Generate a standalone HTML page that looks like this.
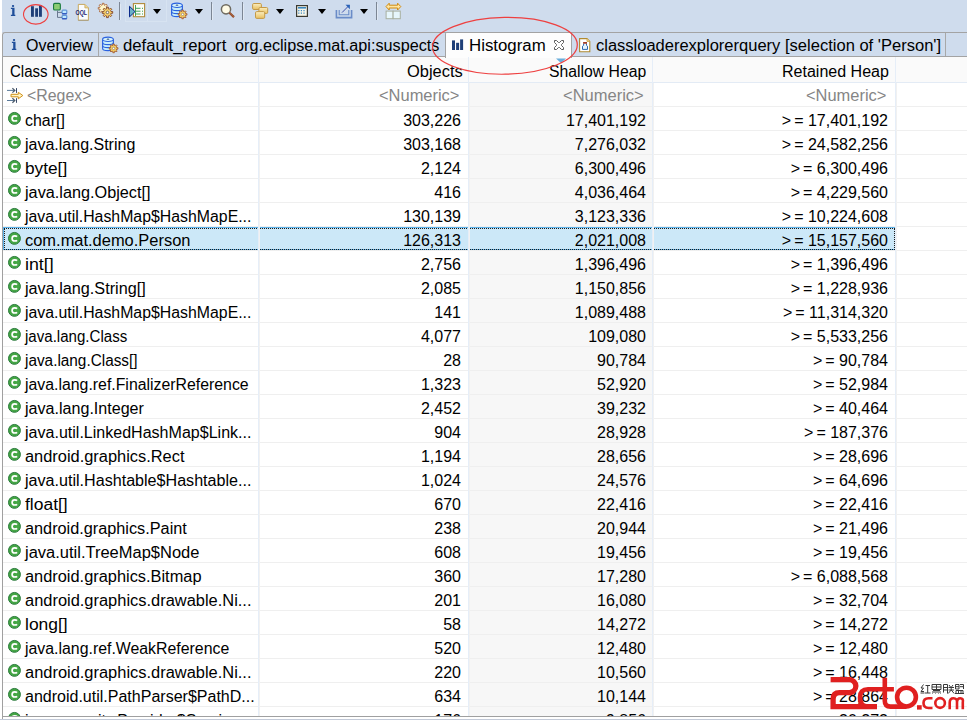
<!DOCTYPE html>
<html><head><meta charset="utf-8">
<style>
*{margin:0;padding:0;box-sizing:border-box}
html,body{width:967px;height:720px;overflow:hidden;background:#fff}
body{position:relative;font-family:"Liberation Sans",sans-serif;font-size:16px;color:#000}
svg{position:absolute;overflow:visible}
.fit{position:absolute;white-space:nowrap;line-height:23px;transform-origin:0 0}
#tb{position:absolute;left:2px;top:0;width:965px;height:33px;background:#cfdced}
.sep{position:absolute;top:2px;width:1px;height:18px;background:#7c8694}
.sep:after{content:"";position:absolute;left:1px;top:2px;width:1px;height:16px;background:#e0e9f4}
.dd{position:absolute;top:9px;width:0;height:0;border-left:4.9px solid transparent;border-right:4.9px solid transparent;border-top:5.3px solid #000}
#hot{position:absolute;left:125px;top:0;width:42px;height:22px;background:#cfdced;border:1px solid #d7e3f1;border-top:none}
#hot:after{content:"";position:absolute;left:21px;top:0;width:1px;height:21px;background:#d7e3f1}
#tabs{position:absolute;left:2px;top:32px;width:965px;height:25px;background:#cfdced;border-top:1px solid #a3a3a3;border-left:1px solid #a3a3a3;border-bottom:1px solid #a3a3a3;border-top-left-radius:3px}
.tsep{position:absolute;top:33px;width:1px;height:23px;background:#a8a8a8}
#act{position:absolute;left:445px;top:32px;width:127px;height:26px;background:#fdfdfd;border:1px solid #a3a3a3;border-bottom:none;border-top-left-radius:2px;border-top-right-radius:2px}
#grid{position:absolute;left:2px;top:57px;width:965px;height:659px;background:#fff;border-left:1px solid #a0a0a0;overflow:hidden}
#hdr{position:absolute;left:0;top:0;width:964px;height:26px;background:#fafafa;border-bottom:1px solid #e3ebf5}
.vl{position:absolute;width:1px;background:#e6eef8}
.vg{position:absolute;top:83px;width:1px;height:633px;background:#f1f1f1}
.row{position:absolute;left:3px;width:964px;height:24px;border-bottom:1px solid #efefef}
.row span,.rowx span{position:absolute;top:1px}
.rowx{position:absolute;left:3px;width:892px;height:24px;white-space:nowrap;line-height:25px}
.rowx .t4{right:7px}
.flt{color:#858585}
.gt{letter-spacing:3px;font-weight:normal}
.t1{left:22px}
.t2{right:434px}
.t3{right:249px}
.t4{right:6px}
.ci{position:absolute;left:5px;top:5px;width:13px;height:13px;border-radius:50%;background:#3f9e3f;border:1px solid #2f7f31}
.ci:after{content:"";position:absolute;left:2px;top:2px;width:7px;height:7px;border:2px solid #fff;border-right-color:transparent;border-radius:50%;box-sizing:border-box}
.sel{position:absolute;left:3px;height:23px;background:#cce8f8;box-shadow:inset 0 0 0 1px #5cb2ea;width:893px}
.sel:after{content:"";position:absolute;left:1px;top:1px;right:1px;bottom:0;border:1px dotted #1a1a1a}
#col3{position:absolute;left:469px;top:83px;width:183px;height:633px;background:#f7f7f7}
#bot{position:absolute;left:2px;top:716px;width:965px;height:4px;background:#fff;border-top:1px solid #a0a0a0;border-left:1px solid #a0a0a0}
#bot:after{content:"";position:absolute;left:-3px;right:0;bottom:0;height:1px;background:#c3cad8}
</style></head><body>
<div id="tb"></div>
<div id="tabs"></div>
<div id="grid"></div>
<div id="hdr" style="left:3px;top:57px"></div>
<div id="col3"></div>
<svg style="left:10px;top:4px" width="6" height="13" viewBox="0 0 6 13"><rect x="1.9" y="0.9" width="2.3" height="2.1" rx="1" fill="#1f4e9a"/><path d="M0.9 3.8H4.5V10.7H5.3V12H0.9V10.7H2.2V5.1H0.9z" fill="#1f4e9a"/></svg><svg style="left:31px;top:5px" width="12" height="12" viewBox="0 0 12 12"><rect x="0" y="1.2" width="2.9" height="10.6" fill="#1e3f78"/><rect x="4.2" y="3.3" width="2.8" height="8.5" fill="#1e3f78"/><rect x="8" y="0.2" width="2.9" height="11.6" fill="#1e3f78"/></svg><svg style="left:52px;top:2px" width="16" height="18" viewBox="0 0 16 18"><rect x="1.55" y="1.4" width="6.8" height="6.6" rx="1.3" fill="#8ccc72" stroke="#1a7a3e" stroke-width="1.1"/><path d="M5.5 8.5V15.4H10M5.5 10.4H10" stroke="#6a7890" stroke-width="1" fill="none"/><rect x="10.1" y="8.1" width="4.7" height="3.7" rx="0.6" fill="#bfe8ff" stroke="#3a78c8" stroke-width="0.9"/><rect x="10.1" y="13.3" width="4.7" height="3.5" rx="0.6" fill="#bfe8ff" stroke="#3a78c8" stroke-width="0.9"/><path d="M10.1 11.8h4.7M10.1 16.8h4.7" stroke="#1f3fb8" stroke-width="1"/></svg><svg style="left:75px;top:3px" width="15" height="16" viewBox="0 0 15 16"><path d="M3.3 1.4h6.6l3.5 3.5v12.4H3.3z" fill="#fafcff" stroke="#c8a860" stroke-width="1"/><path d="M9.9 1.4v3.5h3.5" fill="#f0d890" stroke="#c8a860" stroke-width="0.8"/><path d="M3.3 17.3h10.1" stroke="#a8a088" stroke-width="1"/><text x="0.5" y="12" font-family="Liberation Sans" font-weight="bold" font-size="7.6" fill="#1a2470" textLength="11.5" lengthAdjust="spacingAndGlyphs">OQL</text></svg><svg style="left:94px;top:0px" width="20" height="20" viewBox="0 0 20 20"><path d="M14.13 7.39L14.13 9.11L12.60 9.07L12.18 10.08L13.29 11.13L12.08 12.34L11.03 11.23L10.02 11.65L10.06 13.18L8.34 13.18L8.38 11.65L7.37 11.23L6.32 12.34L5.11 11.13L6.22 10.08L5.80 9.07L4.27 9.11L4.27 7.39L5.80 7.43L6.22 6.42L5.11 5.37L6.32 4.16L7.37 5.27L8.38 4.85L8.34 3.32L10.06 3.32L10.02 4.85L11.03 5.27L12.08 4.16L13.29 5.37L12.18 6.42L12.60 7.43Z" fill="#fff6c8" stroke="#b07048" stroke-width="1"/><path d="M18.67 11.49L18.67 13.31L17.05 13.26L16.60 14.33L17.79 15.45L16.50 16.74L15.38 15.55L14.31 16.00L14.36 17.62L12.54 17.62L12.59 16.00L11.52 15.55L10.40 16.74L9.11 15.45L10.30 14.33L9.85 13.26L8.23 13.31L8.23 11.49L9.85 11.54L10.30 10.47L9.11 9.35L10.40 8.06L11.52 9.25L12.59 8.80L12.54 7.18L14.36 7.18L14.31 8.80L15.38 9.25L16.50 8.06L17.79 9.35L16.60 10.47L17.05 11.54Z" fill="#f6d06a" stroke="#8a5034" stroke-width="1"/><circle cx="13.45" cy="12.4" r="1.3" fill="#fff" stroke="#5a4a40" stroke-width="0.8"/></svg><div class="sep" style="left:119px"></div><div id="hot"></div><svg style="left:129px;top:3px" width="17" height="15" viewBox="0 0 17 15"><rect x="4.4" y="0.6" width="11.2" height="13.1" fill="#fdfdf8" stroke="#b08a3a" stroke-width="1.1"/><path d="M6.5 2v11M6.5 5.3h5M6.5 8.2h5M6.5 11h5" stroke="#2e9a4a" stroke-width="0.9" fill="none"/><path d="M13 5.3h1M13 8.2h1M13 11h1" stroke="#2e9a4a" stroke-width="1"/><path d="M0.5 3.3l5.5 5.3l-5.5 5.3z" fill="#6ab0c8" stroke="#0a2a8a" stroke-width="1"/></svg><div class="dd" style="left:153px"></div><div class="dd" style="left:195px"></div><div class="dd" style="left:276px"></div><div class="dd" style="left:318px"></div><div class="dd" style="left:360px"></div><svg style="left:170px;top:2px" width="18" height="18" viewBox="0 0 18 18"><path d="M1.6 3.3V12.4A5.4 2.2 0 0 0 12.4 12.4V3.3" fill="#c6ecfa" stroke="#2a62e0" stroke-width="1.1"/><path d="M1.6 6.4A5.4 2.2 0 0 0 12.4 6.4M1.6 9.4A5.4 2.2 0 0 0 12.4 9.4" fill="none" stroke="#2a62e0" stroke-width="1.1"/><ellipse cx="7" cy="3.3" rx="5.4" ry="2.2" fill="#d8f4fc" stroke="#2a62e0" stroke-width="1.1"/><ellipse cx="7" cy="3.2" rx="1.4" ry="0.6" fill="#3a5a8a"/><path d="M16.93 11.64L16.93 13.16L15.61 13.12L15.24 14.02L16.20 14.93L15.13 16.00L14.22 15.04L13.32 15.41L13.36 16.73L11.84 16.73L11.88 15.41L10.98 15.04L10.07 16.00L9.00 14.93L9.96 14.02L9.59 13.12L8.27 13.16L8.27 11.64L9.59 11.68L9.96 10.78L9.00 9.87L10.07 8.80L10.98 9.76L11.88 9.39L11.84 8.07L13.36 8.07L13.32 9.39L14.22 9.76L15.13 8.80L16.20 9.87L15.24 10.78L15.61 11.68Z" fill="#f8d060" stroke="#a05a34" stroke-width="0.9"/><circle cx="12.6" cy="12.4" r="1.2" fill="#fff" stroke="#7a6a60" stroke-width="0.6"/></svg><div class="sep" style="left:211px"></div><svg style="left:220px;top:3px" width="16" height="16" viewBox="0 0 16 16"><circle cx="6" cy="6.3" r="4.6" fill="#fffbe6" stroke="#6e6a60" stroke-width="1.5"/><path d="M9.4 9.7l4.6 4.4" stroke="#8a4a2a" stroke-width="2.2"/><path d="M9.4 9.7l4.6 4.4" stroke="#c06a40" stroke-width="0.8"/></svg><div class="sep" style="left:242px"></div><svg style="left:251px;top:2px" width="18" height="18" viewBox="0 0 18 18"><defs><linearGradient id="gy" x1="0" y1="0" x2="0" y2="1"><stop offset="0" stop-color="#fbeec0"/><stop offset="1" stop-color="#e8c060"/></linearGradient></defs><rect x="1.6" y="1.5" width="8.8" height="6" rx="1.2" fill="url(#gy)" stroke="#c49a48"/><rect x="7.9" y="5.5" width="8.8" height="6" rx="1.2" fill="url(#gy)" stroke="#c49a48"/><rect x="4.5" y="9.6" width="9.2" height="6.8" rx="1.2" fill="url(#gy)" stroke="#c49a48"/></svg><svg style="left:296px;top:5px" width="12" height="12" viewBox="0 0 12 12"><rect x="0.6" y="0.6" width="10.8" height="10.8" fill="#f6f6ea" stroke="#3a3a32" stroke-width="1.2"/><rect x="2" y="2" width="8" height="1.6" fill="#3a88c0"/><path d="M2.2 5.6h1.2M4.8 5.6h1.2M7.4 5.6h1.2M2.2 8.2h1.2M4.8 8.2h1.2M7.4 8.2h1.2" stroke="#3a88c0" stroke-width="1.3"/></svg><svg style="left:335px;top:3px" width="18" height="16" viewBox="0 0 18 16"><path d="M1.4 7v7.6h15.2V7" fill="none" stroke="#6a8cc8" stroke-width="1.6"/><path d="M4.2 7v4.8h9.6V7" fill="none" stroke="#6a8cc8" stroke-width="1.1"/><path d="M7 9.6L14 2.5" stroke="#3040a0" stroke-width="0.9"/><path d="M10.5 1.8h4.4v4.4z" fill="#2a62b8"/></svg><div class="sep" style="left:376px"></div><svg style="left:385px;top:2px" width="17" height="18" viewBox="0 0 17 18"><path d="M4.2 1.2L1 4.6L4.2 8V6h8.4v2l3.2-3.4L12.6 1.2v2H4.2z" fill="#ffe6a0" stroke="#d08a10" stroke-width="1"/><rect x="1.1" y="9.1" width="7" height="7.6" fill="#e6f6fc" stroke="#a8b0a0"/><rect x="8.1" y="9.1" width="7.2" height="7.6" fill="#e6f6fc" stroke="#a8b0a0"/></svg><svg style="left:0;top:0" width="60" height="30" viewBox="0 0 60 30"><ellipse cx="35.8" cy="14.35" rx="12.3" ry="9.75" fill="none" stroke="#ee4040" stroke-width="1.1"/></svg>
<svg style="left:11px;top:38px" width="6" height="13" viewBox="0 0 6 13"><rect x="1.9" y="0.9" width="2.3" height="2.1" rx="1" fill="#1f4e9a"/><path d="M0.9 3.8H4.5V10.7H5.3V12H0.9V10.7H2.2V5.1H0.9z" fill="#1f4e9a"/></svg><span class="fit " style="transform:scaleX(1.0011);left:26.40px;top:34px;">Overview</span><div class="tsep" style="left:98px"></div><svg style="left:101px;top:36px" width="18" height="18" viewBox="0 0 18 18"><path d="M1.6 3.3V12.4A5.4 2.2 0 0 0 12.4 12.4V3.3" fill="#c6ecfa" stroke="#2a62e0" stroke-width="1.1"/><path d="M1.6 6.4A5.4 2.2 0 0 0 12.4 6.4M1.6 9.4A5.4 2.2 0 0 0 12.4 9.4" fill="none" stroke="#2a62e0" stroke-width="1.1"/><ellipse cx="7" cy="3.3" rx="5.4" ry="2.2" fill="#d8f4fc" stroke="#2a62e0" stroke-width="1.1"/><ellipse cx="7" cy="3.2" rx="1.4" ry="0.6" fill="#3a5a8a"/><path d="M16.93 11.64L16.93 13.16L15.61 13.12L15.24 14.02L16.20 14.93L15.13 16.00L14.22 15.04L13.32 15.41L13.36 16.73L11.84 16.73L11.88 15.41L10.98 15.04L10.07 16.00L9.00 14.93L9.96 14.02L9.59 13.12L8.27 13.16L8.27 11.64L9.59 11.68L9.96 10.78L9.00 9.87L10.07 8.80L10.98 9.76L11.88 9.39L11.84 8.07L13.36 8.07L13.32 9.39L14.22 9.76L15.13 8.80L16.20 9.87L15.24 10.78L15.61 11.68Z" fill="#f8d060" stroke="#a05a34" stroke-width="0.9"/><circle cx="12.6" cy="12.4" r="1.2" fill="#fff" stroke="#7a6a60" stroke-width="0.6"/></svg><span class="fit " style="transform:scaleX(1.0464);left:122.80px;top:34px;">default_report</span><span class="fit " style="transform:scaleX(1.0125);left:235.40px;top:34px;">org.eclipse.mat.api:suspects</span><div id="act"></div><svg style="left:452px;top:39px" width="12" height="12" viewBox="0 0 12 12"><rect x="0" y="1.4" width="3" height="9.6" fill="#1e3f78"/><rect x="4.1" y="3.8" width="3" height="7.2" fill="#1e3f78"/><rect x="8.1" y="0.4" width="3" height="10.6" fill="#1e3f78"/></svg><span class="fit " style="transform:scaleX(1.0520);left:468.75px;top:34px;">Histogram</span><svg style="left:554px;top:40px" width="10" height="10" viewBox="0 0 10 10"><path d="M0.5 0.5H2.5L4.5 2.5H5.5L7.5 0.5H9.5V2.5L7.5 4.5V5.5L9.5 7.5V9.5H7.5L5.5 7.5H4.5L2.5 9.5H0.5V7.5L2.5 5.5V4.5L0.5 2.5Z" fill="#fff" stroke="#5c5c5c" stroke-width="1"/></svg><svg style="left:578px;top:37px" width="13" height="16" viewBox="0 0 13 16"><path d="M1.6 1.6h7.4l2.8 2.8v10.4H1.6z" fill="#fff" stroke="#b08a30" stroke-width="1.1"/><path d="M9 1.6v2.8h2.8" fill="#f0d890" stroke="#c8a040" stroke-width="0.8"/><path d="M5.6 6.7V8.4L4.5 9.2V12.4H9.5V9.2L8.5 8.4V6.7" fill="#e6f4fc" stroke="#2a68b0" stroke-width="1"/><rect x="5.1" y="5.1" width="3.9" height="1.6" fill="#9a2a10"/></svg><span class="fit " style="transform:scaleX(1.0310);left:596.20px;top:34px;">classloaderexplorerquery</span><span class="fit " style="transform:scaleX(1.0332);left:785.17px;top:34px;">[selection of 'Person']</span><div class="tsep" style="left:945px"></div>
<span class="fit " style="transform:scaleX(0.9400);left:9.50px;top:60px;">Class Name</span><span class="fit " style="transform:scaleX(1.0269);left:406.70px;top:60px;">Objects</span><span class="fit " style="transform:scaleX(0.9845);left:548.70px;top:60px;">Shallow Heap</span><span class="fit " style="transform:scaleX(1.0015);left:782.00px;top:60px;">Retained Heap</span><svg style="left:556px;top:58px" width="11" height="6" viewBox="0 0 11 6"><path d="M0 0.5h10l-5 4.6z" fill="#6aaedc"/></svg>
<div class="row" style="top:83px;color:#8a8a8a"><svg style="left:0px;top:0px" width="24" height="24" viewBox="0 0 24 24"><path d="M4 7.4H11.5M4 17.5H11.5" stroke="#5a7a9a" stroke-width="1" fill="none"/><path d="M9.4 5.2L11.8 7.4L9.4 9.6M9.4 15.3L11.8 17.5L9.4 19.7" stroke="#4a5868" stroke-width="1.2" fill="none"/><path d="M13.5 5.1V9.9M13.5 15.2V19.8" stroke="#3a4a68" stroke-width="1" fill="none"/><path d="M8 11.3H15.3V9.3L19.8 12.5L15.3 15.8V13.8H8Z" fill="#fff6c8" stroke="#d09018" stroke-width="1"/></svg></div><span class="fit flt" style="transform:scaleX(0.9924);left:26.90px;top:84px;">&lt;Regex&gt;</span><span class="fit flt" style="transform:scaleX(1.0282);left:378.80px;top:84px;">&lt;Numeric&gt;</span><span class="fit flt" style="transform:scaleX(1.0320);left:563.10px;top:84px;">&lt;Numeric&gt;</span><span class="fit flt" style="transform:scaleX(1.0269);left:806.20px;top:84px;">&lt;Numeric&gt;</span>
<div class="row" style="top:107px"></div><div class="rowx" style="top:107px"><svg style="left:4px;top:4px" width="15" height="15" viewBox="0 0 15 15"><circle cx="7.45" cy="7.4" r="5.95" fill="#44a644" stroke="#2a7a3c" stroke-width="1"/><path d="M10.1 5.6Q9.4 4.9 7.7 4.9Q5.1 4.9 5.1 7.45Q5.1 10 7.7 10Q9.4 10 10.1 9.3" fill="none" stroke="#fff" stroke-width="1.7"/></svg></div><span class="fit cn" style="transform:scaleX(0.9982);left:25.00px;top:108.5px;">char[]</span><div class="rowx" style="top:107px"><span class="t2">303,226</span><span class="t3">17,401,192</span><span class="t4"><b class="gt">&gt;</b>= 17,401,192</span></div>
<div class="row" style="top:131px"></div><div class="rowx" style="top:131px"><svg style="left:4px;top:4px" width="15" height="15" viewBox="0 0 15 15"><circle cx="7.45" cy="7.4" r="5.95" fill="#44a644" stroke="#2a7a3c" stroke-width="1"/><path d="M10.1 5.6Q9.4 4.9 7.7 4.9Q5.1 4.9 5.1 7.45Q5.1 10 7.7 10Q9.4 10 10.1 9.3" fill="none" stroke="#fff" stroke-width="1.7"/></svg></div><span class="fit cn" style="transform:scaleX(1.0001);left:25.00px;top:132.5px;">java.lang.String</span><div class="rowx" style="top:131px"><span class="t2">303,168</span><span class="t3">7,276,032</span><span class="t4"><b class="gt">&gt;</b>= 24,582,256</span></div>
<div class="row" style="top:155px"></div><div class="rowx" style="top:155px"><svg style="left:4px;top:4px" width="15" height="15" viewBox="0 0 15 15"><circle cx="7.45" cy="7.4" r="5.95" fill="#44a644" stroke="#2a7a3c" stroke-width="1"/><path d="M10.1 5.6Q9.4 4.9 7.7 4.9Q5.1 4.9 5.1 7.45Q5.1 10 7.7 10Q9.4 10 10.1 9.3" fill="none" stroke="#fff" stroke-width="1.7"/></svg></div><span class="fit cn" style="transform:scaleX(1.0779);left:25.00px;top:156.5px;">byte[]</span><div class="rowx" style="top:155px"><span class="t2">2,124</span><span class="t3">6,300,496</span><span class="t4"><b class="gt">&gt;</b>= 6,300,496</span></div>
<div class="row" style="top:179px"></div><div class="rowx" style="top:179px"><svg style="left:4px;top:4px" width="15" height="15" viewBox="0 0 15 15"><circle cx="7.45" cy="7.4" r="5.95" fill="#44a644" stroke="#2a7a3c" stroke-width="1"/><path d="M10.1 5.6Q9.4 4.9 7.7 4.9Q5.1 4.9 5.1 7.45Q5.1 10 7.7 10Q9.4 10 10.1 9.3" fill="none" stroke="#fff" stroke-width="1.7"/></svg></div><span class="fit cn" style="transform:scaleX(1.0148);left:25.00px;top:180.5px;">java.lang.Object[]</span><div class="rowx" style="top:179px"><span class="t2">416</span><span class="t3">4,036,464</span><span class="t4"><b class="gt">&gt;</b>= 4,229,560</span></div>
<div class="row" style="top:203px"></div><div class="rowx" style="top:203px"><svg style="left:4px;top:4px" width="15" height="15" viewBox="0 0 15 15"><circle cx="7.45" cy="7.4" r="5.95" fill="#44a644" stroke="#2a7a3c" stroke-width="1"/><path d="M10.1 5.6Q9.4 4.9 7.7 4.9Q5.1 4.9 5.1 7.45Q5.1 10 7.7 10Q9.4 10 10.1 9.3" fill="none" stroke="#fff" stroke-width="1.7"/></svg></div><span class="fit cn" style="transform:scaleX(0.9907);left:25.00px;top:204.5px;">java.util.HashMap$HashMapE...</span><div class="rowx" style="top:203px"><span class="t2">130,139</span><span class="t3">3,123,336</span><span class="t4"><b class="gt">&gt;</b>= 10,224,608</span></div>
<div class="row" style="top:227px"></div><div class="sel" style="top:227px"></div><div class="rowx" style="top:227px"><svg style="left:4px;top:4px" width="15" height="15" viewBox="0 0 15 15"><circle cx="7.45" cy="7.4" r="5.95" fill="#44a644" stroke="#2a7a3c" stroke-width="1"/><path d="M10.1 5.6Q9.4 4.9 7.7 4.9Q5.1 4.9 5.1 7.45Q5.1 10 7.7 10Q9.4 10 10.1 9.3" fill="none" stroke="#fff" stroke-width="1.7"/></svg></div><span class="fit cn" style="transform:scaleX(1.0278);left:25.00px;top:228.5px;">com.mat.demo.Person</span><div class="rowx" style="top:227px"><span class="t2">126,313</span><span class="t3">2,021,008</span><span class="t4"><b class="gt">&gt;</b>= 15,157,560</span></div>
<div class="row" style="top:251px"></div><div class="rowx" style="top:251px"><svg style="left:4px;top:4px" width="15" height="15" viewBox="0 0 15 15"><circle cx="7.45" cy="7.4" r="5.95" fill="#44a644" stroke="#2a7a3c" stroke-width="1"/><path d="M10.1 5.6Q9.4 4.9 7.7 4.9Q5.1 4.9 5.1 7.45Q5.1 10 7.7 10Q9.4 10 10.1 9.3" fill="none" stroke="#fff" stroke-width="1.7"/></svg></div><span class="fit cn" style="transform:scaleX(1.1127);left:25.00px;top:252.5px;">int[]</span><div class="rowx" style="top:251px"><span class="t2">2,756</span><span class="t3">1,396,496</span><span class="t4"><b class="gt">&gt;</b>= 1,396,496</span></div>
<div class="row" style="top:275px"></div><div class="rowx" style="top:275px"><svg style="left:4px;top:4px" width="15" height="15" viewBox="0 0 15 15"><circle cx="7.45" cy="7.4" r="5.95" fill="#44a644" stroke="#2a7a3c" stroke-width="1"/><path d="M10.1 5.6Q9.4 4.9 7.7 4.9Q5.1 4.9 5.1 7.45Q5.1 10 7.7 10Q9.4 10 10.1 9.3" fill="none" stroke="#fff" stroke-width="1.7"/></svg></div><span class="fit cn" style="transform:scaleX(1.0123);left:25.00px;top:276.5px;">java.lang.String[]</span><div class="rowx" style="top:275px"><span class="t2">2,085</span><span class="t3">1,150,856</span><span class="t4"><b class="gt">&gt;</b>= 1,228,936</span></div>
<div class="row" style="top:299px"></div><div class="rowx" style="top:299px"><svg style="left:4px;top:4px" width="15" height="15" viewBox="0 0 15 15"><circle cx="7.45" cy="7.4" r="5.95" fill="#44a644" stroke="#2a7a3c" stroke-width="1"/><path d="M10.1 5.6Q9.4 4.9 7.7 4.9Q5.1 4.9 5.1 7.45Q5.1 10 7.7 10Q9.4 10 10.1 9.3" fill="none" stroke="#fff" stroke-width="1.7"/></svg></div><span class="fit cn" style="transform:scaleX(0.9907);left:25.00px;top:300.5px;">java.util.HashMap$HashMapE...</span><div class="rowx" style="top:299px"><span class="t2">141</span><span class="t3">1,089,488</span><span class="t4"><b class="gt">&gt;</b>= 11,314,320</span></div>
<div class="row" style="top:323px"></div><div class="rowx" style="top:323px"><svg style="left:4px;top:4px" width="15" height="15" viewBox="0 0 15 15"><circle cx="7.45" cy="7.4" r="5.95" fill="#44a644" stroke="#2a7a3c" stroke-width="1"/><path d="M10.1 5.6Q9.4 4.9 7.7 4.9Q5.1 4.9 5.1 7.45Q5.1 10 7.7 10Q9.4 10 10.1 9.3" fill="none" stroke="#fff" stroke-width="1.7"/></svg></div><span class="fit cn" style="transform:scaleX(0.9419);left:25.00px;top:324.5px;">java.lang.Class</span><div class="rowx" style="top:323px"><span class="t2">4,077</span><span class="t3">109,080</span><span class="t4"><b class="gt">&gt;</b>= 5,533,256</span></div>
<div class="row" style="top:347px"></div><div class="rowx" style="top:347px"><svg style="left:4px;top:4px" width="15" height="15" viewBox="0 0 15 15"><circle cx="7.45" cy="7.4" r="5.95" fill="#44a644" stroke="#2a7a3c" stroke-width="1"/><path d="M10.1 5.6Q9.4 4.9 7.7 4.9Q5.1 4.9 5.1 7.45Q5.1 10 7.7 10Q9.4 10 10.1 9.3" fill="none" stroke="#fff" stroke-width="1.7"/></svg></div><span class="fit cn" style="transform:scaleX(0.9586);left:25.00px;top:348.5px;">java.lang.Class[]</span><div class="rowx" style="top:347px"><span class="t2">28</span><span class="t3">90,784</span><span class="t4"><b class="gt">&gt;</b>= 90,784</span></div>
<div class="row" style="top:371px"></div><div class="rowx" style="top:371px"><svg style="left:4px;top:4px" width="15" height="15" viewBox="0 0 15 15"><circle cx="7.45" cy="7.4" r="5.95" fill="#44a644" stroke="#2a7a3c" stroke-width="1"/><path d="M10.1 5.6Q9.4 4.9 7.7 4.9Q5.1 4.9 5.1 7.45Q5.1 10 7.7 10Q9.4 10 10.1 9.3" fill="none" stroke="#fff" stroke-width="1.7"/></svg></div><span class="fit cn" style="transform:scaleX(0.9899);left:25.00px;top:372.5px;">java.lang.ref.FinalizerReference</span><div class="rowx" style="top:371px"><span class="t2">1,323</span><span class="t3">52,920</span><span class="t4"><b class="gt">&gt;</b>= 52,984</span></div>
<div class="row" style="top:395px"></div><div class="rowx" style="top:395px"><svg style="left:4px;top:4px" width="15" height="15" viewBox="0 0 15 15"><circle cx="7.45" cy="7.4" r="5.95" fill="#44a644" stroke="#2a7a3c" stroke-width="1"/><path d="M10.1 5.6Q9.4 4.9 7.7 4.9Q5.1 4.9 5.1 7.45Q5.1 10 7.7 10Q9.4 10 10.1 9.3" fill="none" stroke="#fff" stroke-width="1.7"/></svg></div><span class="fit cn" style="transform:scaleX(1.0052);left:25.00px;top:396.5px;">java.lang.Integer</span><div class="rowx" style="top:395px"><span class="t2">2,452</span><span class="t3">39,232</span><span class="t4"><b class="gt">&gt;</b>= 40,464</span></div>
<div class="row" style="top:419px"></div><div class="rowx" style="top:419px"><svg style="left:4px;top:4px" width="15" height="15" viewBox="0 0 15 15"><circle cx="7.45" cy="7.4" r="5.95" fill="#44a644" stroke="#2a7a3c" stroke-width="1"/><path d="M10.1 5.6Q9.4 4.9 7.7 4.9Q5.1 4.9 5.1 7.45Q5.1 10 7.7 10Q9.4 10 10.1 9.3" fill="none" stroke="#fff" stroke-width="1.7"/></svg></div><span class="fit cn" style="transform:scaleX(1.0024);left:25.00px;top:420.5px;">java.util.LinkedHashMap$Link...</span><div class="rowx" style="top:419px"><span class="t2">904</span><span class="t3">28,928</span><span class="t4"><b class="gt">&gt;</b>= 187,376</span></div>
<div class="row" style="top:443px"></div><div class="rowx" style="top:443px"><svg style="left:4px;top:4px" width="15" height="15" viewBox="0 0 15 15"><circle cx="7.45" cy="7.4" r="5.95" fill="#44a644" stroke="#2a7a3c" stroke-width="1"/><path d="M10.1 5.6Q9.4 4.9 7.7 4.9Q5.1 4.9 5.1 7.45Q5.1 10 7.7 10Q9.4 10 10.1 9.3" fill="none" stroke="#fff" stroke-width="1.7"/></svg></div><span class="fit cn" style="transform:scaleX(1.0244);left:25.00px;top:444.5px;">android.graphics.Rect</span><div class="rowx" style="top:443px"><span class="t2">1,194</span><span class="t3">28,656</span><span class="t4"><b class="gt">&gt;</b>= 28,696</span></div>
<div class="row" style="top:467px"></div><div class="rowx" style="top:467px"><svg style="left:4px;top:4px" width="15" height="15" viewBox="0 0 15 15"><circle cx="7.45" cy="7.4" r="5.95" fill="#44a644" stroke="#2a7a3c" stroke-width="1"/><path d="M10.1 5.6Q9.4 4.9 7.7 4.9Q5.1 4.9 5.1 7.45Q5.1 10 7.7 10Q9.4 10 10.1 9.3" fill="none" stroke="#fff" stroke-width="1.7"/></svg></div><span class="fit cn" style="transform:scaleX(1.0064);left:25.00px;top:468.5px;">java.util.Hashtable$Hashtable...</span><div class="rowx" style="top:467px"><span class="t2">1,024</span><span class="t3">24,576</span><span class="t4"><b class="gt">&gt;</b>= 64,696</span></div>
<div class="row" style="top:491px"></div><div class="rowx" style="top:491px"><svg style="left:4px;top:4px" width="15" height="15" viewBox="0 0 15 15"><circle cx="7.45" cy="7.4" r="5.95" fill="#44a644" stroke="#2a7a3c" stroke-width="1"/><path d="M10.1 5.6Q9.4 4.9 7.7 4.9Q5.1 4.9 5.1 7.45Q5.1 10 7.7 10Q9.4 10 10.1 9.3" fill="none" stroke="#fff" stroke-width="1.7"/></svg></div><span class="fit cn" style="transform:scaleX(1.0908);left:25.00px;top:492.5px;">float[]</span><div class="rowx" style="top:491px"><span class="t2">670</span><span class="t3">22,416</span><span class="t4"><b class="gt">&gt;</b>= 22,416</span></div>
<div class="row" style="top:515px"></div><div class="rowx" style="top:515px"><svg style="left:4px;top:4px" width="15" height="15" viewBox="0 0 15 15"><circle cx="7.45" cy="7.4" r="5.95" fill="#44a644" stroke="#2a7a3c" stroke-width="1"/><path d="M10.1 5.6Q9.4 4.9 7.7 4.9Q5.1 4.9 5.1 7.45Q5.1 10 7.7 10Q9.4 10 10.1 9.3" fill="none" stroke="#fff" stroke-width="1.7"/></svg></div><span class="fit cn" style="transform:scaleX(1.0165);left:25.00px;top:516.5px;">android.graphics.Paint</span><div class="rowx" style="top:515px"><span class="t2">238</span><span class="t3">20,944</span><span class="t4"><b class="gt">&gt;</b>= 21,496</span></div>
<div class="row" style="top:539px"></div><div class="rowx" style="top:539px"><svg style="left:4px;top:4px" width="15" height="15" viewBox="0 0 15 15"><circle cx="7.45" cy="7.4" r="5.95" fill="#44a644" stroke="#2a7a3c" stroke-width="1"/><path d="M10.1 5.6Q9.4 4.9 7.7 4.9Q5.1 4.9 5.1 7.45Q5.1 10 7.7 10Q9.4 10 10.1 9.3" fill="none" stroke="#fff" stroke-width="1.7"/></svg></div><span class="fit cn" style="transform:scaleX(1.0303);left:25.00px;top:540.5px;">java.util.TreeMap$Node</span><div class="rowx" style="top:539px"><span class="t2">608</span><span class="t3">19,456</span><span class="t4"><b class="gt">&gt;</b>= 19,456</span></div>
<div class="row" style="top:563px"></div><div class="rowx" style="top:563px"><svg style="left:4px;top:4px" width="15" height="15" viewBox="0 0 15 15"><circle cx="7.45" cy="7.4" r="5.95" fill="#44a644" stroke="#2a7a3c" stroke-width="1"/><path d="M10.1 5.6Q9.4 4.9 7.7 4.9Q5.1 4.9 5.1 7.45Q5.1 10 7.7 10Q9.4 10 10.1 9.3" fill="none" stroke="#fff" stroke-width="1.7"/></svg></div><span class="fit cn" style="transform:scaleX(1.0229);left:25.00px;top:564.5px;">android.graphics.Bitmap</span><div class="rowx" style="top:563px"><span class="t2">360</span><span class="t3">17,280</span><span class="t4"><b class="gt">&gt;</b>= 6,088,568</span></div>
<div class="row" style="top:587px"></div><div class="rowx" style="top:587px"><svg style="left:4px;top:4px" width="15" height="15" viewBox="0 0 15 15"><circle cx="7.45" cy="7.4" r="5.95" fill="#44a644" stroke="#2a7a3c" stroke-width="1"/><path d="M10.1 5.6Q9.4 4.9 7.7 4.9Q5.1 4.9 5.1 7.45Q5.1 10 7.7 10Q9.4 10 10.1 9.3" fill="none" stroke="#fff" stroke-width="1.7"/></svg></div><span class="fit cn" style="transform:scaleX(1.0268);left:25.00px;top:588.5px;">android.graphics.drawable.Ni...</span><div class="rowx" style="top:587px"><span class="t2">201</span><span class="t3">16,080</span><span class="t4"><b class="gt">&gt;</b>= 32,704</span></div>
<div class="row" style="top:611px"></div><div class="rowx" style="top:611px"><svg style="left:4px;top:4px" width="15" height="15" viewBox="0 0 15 15"><circle cx="7.45" cy="7.4" r="5.95" fill="#44a644" stroke="#2a7a3c" stroke-width="1"/><path d="M10.1 5.6Q9.4 4.9 7.7 4.9Q5.1 4.9 5.1 7.45Q5.1 10 7.7 10Q9.4 10 10.1 9.3" fill="none" stroke="#fff" stroke-width="1.7"/></svg></div><span class="fit cn" style="transform:scaleX(1.0906);left:25.00px;top:612.5px;">long[]</span><div class="rowx" style="top:611px"><span class="t2">58</span><span class="t3">14,272</span><span class="t4"><b class="gt">&gt;</b>= 14,272</span></div>
<div class="row" style="top:635px"></div><div class="rowx" style="top:635px"><svg style="left:4px;top:4px" width="15" height="15" viewBox="0 0 15 15"><circle cx="7.45" cy="7.4" r="5.95" fill="#44a644" stroke="#2a7a3c" stroke-width="1"/><path d="M10.1 5.6Q9.4 4.9 7.7 4.9Q5.1 4.9 5.1 7.45Q5.1 10 7.7 10Q9.4 10 10.1 9.3" fill="none" stroke="#fff" stroke-width="1.7"/></svg></div><span class="fit cn" style="transform:scaleX(0.9911);left:25.00px;top:636.5px;">java.lang.ref.WeakReference</span><div class="rowx" style="top:635px"><span class="t2">520</span><span class="t3">12,480</span><span class="t4"><b class="gt">&gt;</b>= 12,480</span></div>
<div class="row" style="top:659px"></div><div class="rowx" style="top:659px"><svg style="left:4px;top:4px" width="15" height="15" viewBox="0 0 15 15"><circle cx="7.45" cy="7.4" r="5.95" fill="#44a644" stroke="#2a7a3c" stroke-width="1"/><path d="M10.1 5.6Q9.4 4.9 7.7 4.9Q5.1 4.9 5.1 7.45Q5.1 10 7.7 10Q9.4 10 10.1 9.3" fill="none" stroke="#fff" stroke-width="1.7"/></svg></div><span class="fit cn" style="transform:scaleX(1.0268);left:25.00px;top:660.5px;">android.graphics.drawable.Ni...</span><div class="rowx" style="top:659px"><span class="t2">220</span><span class="t3">10,560</span><span class="t4"><b class="gt">&gt;</b>= 16,448</span></div>
<div class="row" style="top:683px"></div><div class="rowx" style="top:683px"><svg style="left:4px;top:4px" width="15" height="15" viewBox="0 0 15 15"><circle cx="7.45" cy="7.4" r="5.95" fill="#44a644" stroke="#2a7a3c" stroke-width="1"/><path d="M10.1 5.6Q9.4 4.9 7.7 4.9Q5.1 4.9 5.1 7.45Q5.1 10 7.7 10Q9.4 10 10.1 9.3" fill="none" stroke="#fff" stroke-width="1.7"/></svg></div><span class="fit cn" style="transform:scaleX(1.0008);left:25.00px;top:684.5px;">android.util.PathParser$PathD...</span><div class="rowx" style="top:683px"><span class="t2">634</span><span class="t3">10,144</span><span class="t4"><b class="gt">&gt;</b>= 28,864</span></div>
<div class="row" style="top:707px"></div><div class="rowx" style="top:707px"><svg style="left:4px;top:4px" width="15" height="15" viewBox="0 0 15 15"><circle cx="7.45" cy="7.4" r="5.95" fill="#44a644" stroke="#2a7a3c" stroke-width="1"/><path d="M10.1 5.6Q9.4 4.9 7.7 4.9Q5.1 4.9 5.1 7.45Q5.1 10 7.7 10Q9.4 10 10.1 9.3" fill="none" stroke="#fff" stroke-width="1.7"/></svg></div><span class="fit cn" style="left:25px;top:708.5px">java.security.Provider$Service</span><div class="rowx" style="top:707px"><span class="t2">176</span><span class="t3">9,856</span><span class="t4"><b class="gt">&gt;</b>= 30,272</span></div>
<div class="vl" style="left:258px;top:57px;height:659px"></div><div class="vg" style="left:259px"></div>
<div class="vl" style="left:468px;top:57px;height:659px"></div><div class="vg" style="left:469px"></div>
<div class="vl" style="left:652px;top:57px;height:659px"></div><div class="vg" style="left:653px"></div>
<div class="vl" style="left:895px;top:57px;height:659px"></div><div class="vg" style="left:896px"></div>
<div id="bot"></div>
<svg style="left:0;top:0" width="967" height="720"><g fill="none" stroke="#e02020" stroke-width="5.3">
<path d="M830.6 679.65H849.4A6.45 6.45 0 0 1 849.4 692.55H839.6Q833.1 692.55 833.1 699V706.6H877"/>
</g><g fill="none" stroke="#e02020" stroke-width="4.6">
<path d="M893.9 689.3H868Q860 689.3 860 697.5Q860 706.6 868 706.6"/>
<path d="M884.8 677.7V701Q884.8 706.6 890.5 706.6H906.5"/>
<circle cx="906.5" cy="697.1" r="9.4"/>
</g>
<rect x="917" y="705.2" width="4.7" height="4.4" fill="#e02020"/>
<g fill="none" stroke="#e02020" stroke-width="2.6">
<path d="M932.5 698.2H928.5Q923.5 698.2 923.5 703T928.5 708H932.5"/>
<ellipse cx="940.1" cy="703" rx="4.8" ry="4.9"/>
<path d="M949.7 709.3V702.5Q949.7 698.2 953.5 698.2T957 702.5V709.3M957 702.5Q957 698.2 960.3 698.2T962.8 702.5V709.3"/>
</g>
<g fill="none" stroke="#3a3a3a" stroke-width="1">
<path d="M923.5 684.5l-2.5 3.5h2.5l-2.5 3.5h3M920.5 693h4M925.5 685.5h4.5M927.7 685.5v7.5M925 693h5.5"/>
<path d="M932 684.5h9v5h-9zM936.5 684.5v5M932 687h9M933 690.5h7M932 692h9M932.5 693.5l0.5 0M935 693.5h0.5M938 693.5h0.5M940.5 693.5h0.5"/>
<path d="M943.5 684.5h4v9M943.5 684.5v8M943.5 687.5h4M943.5 690h4M949 685l1.5 2M953 685l-1.5 2M948.5 687.5h5.5M948.5 690h5.5M951.2 687.5v2.5l-3 3.5M951.2 690l3 3.5"/>
<path d="M955.5 684.5h3.5v4.5h-3.5zM955.5 686.7h3.5M960 684.5h3.5v4.5M960 686.7h3.5M956 690.5h7v2.5M956 690.5v2.5M958.5 690.5v2.5M961 690.5v2.5M955 693.5h9"/>
</g></svg>
<svg style="left:0;top:0" width="967" height="720"><ellipse cx="504.9" cy="45.8" rx="72.4" ry="28.4" transform="rotate(-1 504.9 45.8)" fill="none" stroke="#ee4040" stroke-width="1.2"/></svg>
</body></html>
